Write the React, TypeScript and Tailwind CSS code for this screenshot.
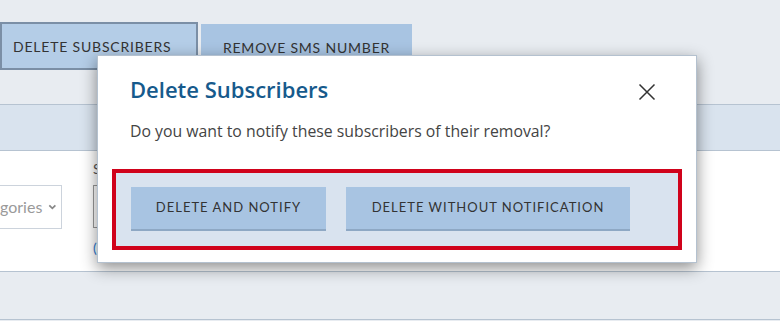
import React from "react";

export default function App() {
  return (
    <div
      className="relative w-[780px] h-[321px] overflow-hidden bg-[#e8ecf1]"
      style={{ fontFamily: "Lato, 'Open Sans', sans-serif" }}
    >
      {/* Top tab area */}
      <div className="h-[104px] pt-[22px] flex items-start">
        <button className="w-[198px] h-[48px] border-2 border-[#7b8fa6] bg-[#b4cde7] text-[14px] tracking-[0.8px] text-[#333] flex items-center justify-start pl-[11px]">
          DELETE SUBSCRIBERS
        </button>
        <button className="ml-[3px] mt-[2px] w-[211px] h-[46px] bg-[#a8c4e2] text-[14px] tracking-[0.8px] text-[#333] flex items-center justify-center">
          REMOVE SMS NUMBER
        </button>
      </div>
      {/* band */}
      <div className="h-[47px] bg-[#d9e3ee] border-y border-[#b6c3d1]" />
      {/* white content */}
      <div className="h-[120px] bg-white flex">
        <div className="mt-[34px] w-[63px] h-[44px] border border-[#ccd3dc] -ml-px flex items-center justify-end pr-[4px] gap-[6px] text-[16px] text-[#9a9a9a]">
          <span>gories</span>
          <svg width="10" height="8" viewBox="0 0 10 8">
            <path d="M1.5 2 L5 5.5 L8.5 2" fill="none" stroke="#888" strokeWidth="2" />
          </svg>
        </div>
        <div className="ml-[31px] flex flex-col">
          <span className="mt-[10px] text-[14px] leading-[16px] text-[#555]">S</span>
          <div className="mt-[8px] w-[60px] h-[43px] border border-[#999]" />
          <span className="mt-[12px] text-[14px] leading-[16px] text-[#2a7bd3]">(</span>
        </div>
      </div>
      {/* bottom */}
      <div className="h-[49px] border-y border-[#b6c3d1] bg-[#e8ecf1]" />

      {/* Modal */}
      <div className="absolute left-[97px] top-[55px] w-[600px] h-[208px] bg-white border border-[#b4c1cf] shadow-[0_5px_15px_rgba(0,0,0,0.45)]">
        <div className="flex items-start justify-between pl-[32px] pr-[40px] pt-[19px]">
          <h2
            className="text-[22px] leading-[28px] font-semibold text-[#165a8c]"
            style={{ fontFamily: "'Open Sans', sans-serif" }}
          >
            Delete Subscribers
          </h2>
          <svg width="18" height="18" viewBox="0 0 18 18" className="mt-[8px]">
            <path d="M1.5 1.5 L16.5 16.5 M16.5 1.5 L1.5 16.5" stroke="#333" strokeWidth="1.5" />
          </svg>
        </div>
        <p
          className="pl-[32px] mt-[18px] text-[15.8px] leading-[20px] text-[#444]"
          style={{ fontFamily: "'Open Sans', sans-serif" }}
        >
          Do you want to notify these subscribers of their removal?
        </p>
        <div className="mx-[14px] mt-[28px] border-4 border-[#d0021b] bg-[#d9e3ef] pl-[15px] pt-[14px] pb-[15px] flex gap-[20px]">
          <button className="w-[195px] h-[44px] bg-[#a8c4e2] border-b-2 border-[#8ea8c4] text-[13px] tracking-[1px] text-[#333] flex items-center justify-center">
            DELETE AND NOTIFY
          </button>
          <button className="w-[284px] h-[44px] bg-[#a8c4e2] border-b-2 border-[#8ea8c4] text-[13px] tracking-[1px] text-[#333] flex items-center justify-center">
            DELETE WITHOUT NOTIFICATION
          </button>
        </div>
      </div>
    </div>
  );
}
